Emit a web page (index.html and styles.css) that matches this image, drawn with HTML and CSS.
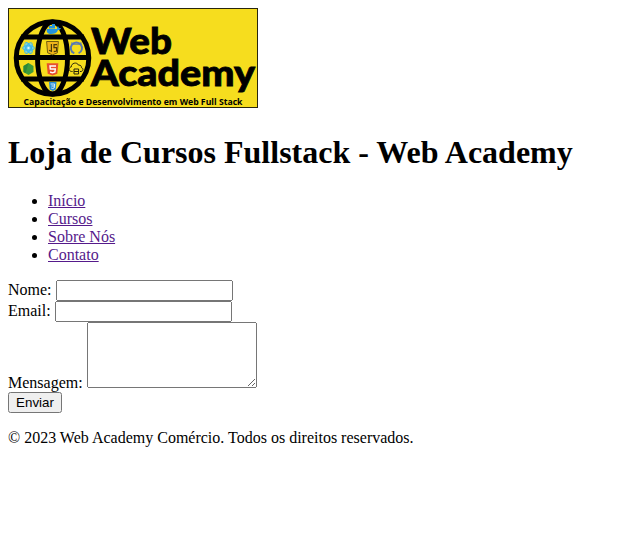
FILE: index.html
```html
<!DOCTYPE html>
<html lang="pt-BR">
<head>
<meta charset="UTF-8">
<title>Loja de Cursos Fullstack - Web Academy</title>
<link rel="stylesheet" href="styles.css">
</head>
<body>
<header>
<svg class="logo" width="250" height="100" viewBox="0 0 250 100" role="img" aria-label="Web Academy">
  <rect class="logo-bg" x=".5" y=".5" width="249" height="99"/>
  <g class="globe">
    <circle cx="44.5" cy="50" r="36.3"/>
    <ellipse cx="44.5" cy="50" rx="15" ry="36"/>
    <path d="M13 29H76M8 49.5H81M13 71H76"/>
  </g>
  <!-- Docker -->
  <path fill="#2494de" d="M39 21h10c0-1 0-2 1-3l1 2h2c-1 2-2 2-3 2-1 3-4 4-7 4-3 0-5-2-4-5zM41 18h6v2.5h-6zM44 16h3v2h-3z"/>
  <!-- React -->
  <circle cx="20.5" cy="40" r="5" fill="#73d0ed"/>
  <g fill="none" stroke="#3db5e8" stroke-width=".9">
    <ellipse cx="20.5" cy="40" rx="6" ry="2.4"/>
    <ellipse cx="20.5" cy="40" rx="6" ry="2.4" transform="rotate(60 20.5 40)"/>
    <ellipse cx="20.5" cy="40" rx="6" ry="2.4" transform="rotate(120 20.5 40)"/>
  </g>
  <circle cx="20.5" cy="40" r="1.1" fill="#e4f8ff"/>
  <!-- JavaScript -->
  <path d="M38.6 33.5h11.8l-1 11.3-4.9 2-4.9-2z" fill="#efb51b" stroke="#66500b" stroke-width=".9"/>
  <path d="M43.4 36v7.3l-2.4-1M49 36.6h-3v3.1h2.6v3.3l-2.8.7" fill="none" stroke="#4a3b09" stroke-width="1.2"/>
  <!-- GitHub -->
  <path d="M66.2 45.2A5.6 5.6 0 1 1 70.6 45.2" fill="none" stroke="#5878b4" stroke-width="1.9"/>
  <path d="M63.5 34l2.6 1.7h4.6l2.6-1.7.3 4-1.2-1.2h-8l-1.2 1.2zM62.5 42.5l3.7 1.8v1.5l-2.5-.8z" fill="#5878b4"/>
  <!-- Node.js -->
  <path fill="#3d9b3b" d="m20.5 55 5 3v6l-5 3-5-3v-6z"/>
  <path fill="#2d8738" d="m20.5 55-5 3v6l2 1.2z"/>
  <!-- HTML5 -->
  <path fill="#e8502d" d="M38.7 55.3h11.6l-1 10.5-4.8 1.8-4.8-1.8z"/>
  <path d="M48 58h-6l.3 3h5l-.4 3-2.4.8-2.4-.8" fill="none" stroke="#fff" stroke-width="1.4"/>
  <!-- Cloud -->
  <g fill="none" stroke="#27230a">
    <path d="M64.6 63.5h-1c-3-.2-3.3-4-.4-4.5 0-4 5.7-5.5 7.4-1.8 2-.4 3 1 2.8 2.4 2.4.8 1.8 3.8-.4 3.9h-1" stroke-width="1"/>
    <path d="M66 61h4.6v5H66zM66 63.5h4.6" stroke-width="1"/>
  </g>
  <!-- CSS3 -->
  <path fill="#268bd4" d="M41 74h7.5l-.7 7.5-3 1.4-3.1-1.4z"/>
  <path d="M42.6 76h4l-.2 2h-3m3 0-.2 2-1.5.5-1.5-.5" fill="none" stroke="#e9f7ff" stroke-width=".9"/>
  <g class="logo-name">
    <text x="83" y="45.5" textLength="81" lengthAdjust="spacingAndGlyphs">Web</text>
    <text x="83" y="78" textLength="164" lengthAdjust="spacingAndGlyphs">Academy</text>
  </g>
  <text class="logo-tagline" x="15.5" y="97.3" textLength="219" lengthAdjust="spacingAndGlyphs">Capacitação e Desenvolvimento em Web Full Stack</text>
</svg>
<h1>Loja de Cursos Fullstack - Web Academy</h1>
<nav>
<ul>
  <li><a href="#">Início</a></li>
  <li><a href="#">Cursos</a></li>
  <li><a href="#">Sobre Nós</a></li>
  <li><a href="#">Contato</a></li>
</ul>
</nav>
</header>
<main>
<form>
  <label for="nome">Nome:</label>
  <input type="text" id="nome"><br>
  <label for="email">Email:</label>
  <input type="email" id="email"><br>
  <label for="mensagem">Mensagem:</label>
  <textarea id="mensagem"></textarea><br>
  <button type="submit">Enviar</button>
</form>
</main>
<footer>
<p>© 2023 Web Academy Comércio. Todos os direitos reservados.</p>
</footer>
</body>
</html>
```
FILE: styles.css
```css
body {
  margin: 8px;
  background: #fff;
  color: #000;
  font: 16px "Liberation Serif", serif;
}

.logo {
  display: block;
}

.logo-bg {
  fill: #f6dd1e;
  stroke: #29260d;
}

.globe {
  fill: none;
  stroke: #000;
  stroke-width: 4.9;
}

.logo-name {
  font: 900 36px Lato, sans-serif;
  stroke: #000;
  stroke-width: .8;
}

.logo-tagline {
  font: 700 9px "Open Sans", sans-serif;
}

h1 {
  margin: 26px 0 21px;
  font-size: 32px;
  line-height: 37px;
}

ul {
  margin: 0 0 16px;
  padding-left: 40px;
}

li {
  line-height: 18px;
}

a {
  color: #551a8b;
}

input {
  box-sizing: border-box;
  width: 177px;
  height: 21px;
  font: 13.333px "Liberation Sans", sans-serif;
}

textarea {
  box-sizing: border-box;
  width: 170px;
  height: 66px;
}

button {
  box-sizing: border-box;
  width: 54px;
  height: 21px;
  padding: 1px 6px;
  font: 13.333px "Liberation Sans", sans-serif;
}

footer p {
  margin: 16px 0;
}
```
